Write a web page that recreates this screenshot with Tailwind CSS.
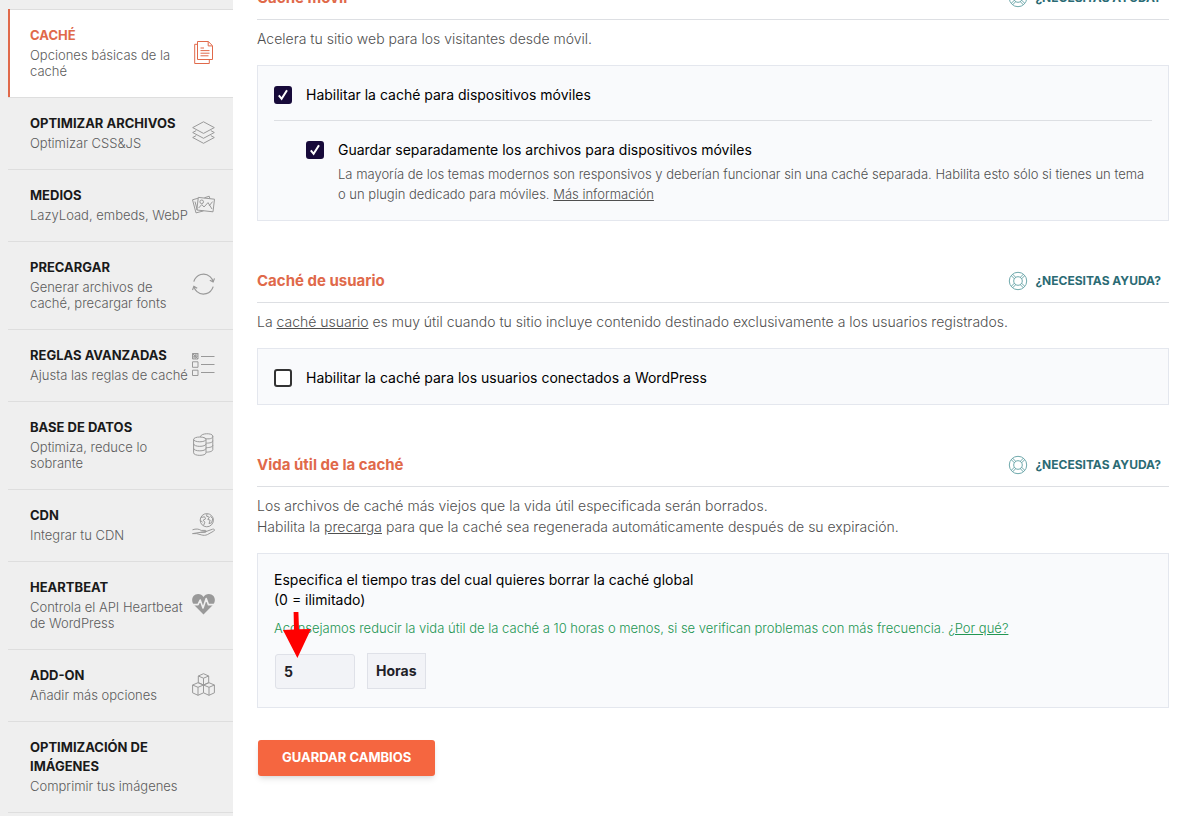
<!DOCTYPE html>
<html lang="es">
<head>
  <meta charset="UTF-8" />
  <meta name="viewport" content="width=device-width, initial-scale=1.0"/>
  <title>Caché</title>
  <script src="https://cdn.jsdelivr.net/npm/@tailwindcss/browser@4"></script>
</head>
<body class="bg-white text-[#4f4f4f] font-['Inter',sans-serif] overflow-x-hidden">

<!-- Life ring, shared by the help links -->
<svg class="hidden">
  <symbol id="help" viewBox="0 0 20 20" fill="none" stroke="currentColor">
    <circle cx="10" cy="10" r="8.7"/>
    <circle cx="10" cy="10" r="4.3"/>
    <path d="M3.2 4.6 6.3 7.7M4.6 3.2 7.7 6.3M16.8 4.6 13.7 7.7M15.4 3.2 12.3 6.3M3.2 15.4 6.3 12.3M4.6 16.8 7.7 13.7M16.8 15.4 13.7 12.3M15.4 16.8 12.3 13.7"/>
  </symbol>
</svg>

<div class="flex min-h-screen">

  <aside class="w-[233px] shrink-0 bg-[#efefef] pt-[9px] pl-2">
    <nav>
      <a href="#cache" class="flex items-center gap-1 border-t border-[#dedede] bg-white pt-4 pb-[18px] pl-[22px] pr-[18px] relative text-[#e0694a]">
        <span class="absolute left-0 -top-px bottom-0 w-[2px] bg-[#e0694a]"></span>
        <span class="flex-1 min-w-0">
          <span class="block text-[13px] leading-[19px] font-bold mb-[2px]">CACHÉ</span>
          <span class="block text-[13px] leading-4 font-light text-[#5c5c5c]">Opciones básicas de la caché</span>
        </span>
        <svg class="size-[23px] shrink-0" viewBox="0 0 23 23" fill="none" stroke="currentColor">
          <path d="M5.5.5h10.8l4.2 4.2v13.8h-15zM16.2.7v4.2h4.2"/>
          <path d="M5.3 3.3H2.7v19.2h14.6v-3.8"/>
          <path d="M8.5 7h3.5M8.5 9.6h9M8.5 12.2h9M8.5 14.8h8"/>
        </svg>
      </a>
      <a href="#archivos" class="flex items-center gap-1 border-t border-[#dedede] pt-4 pb-[18px] pl-[22px] pr-[18px] text-[#999999]">
        <span class="flex-1 min-w-0">
          <span class="block text-[13px] leading-[19px] font-bold text-[#1a1a1a] mb-[2px]">OPTIMIZAR ARCHIVOS</span>
          <span class="block text-[13px] leading-4 font-light text-[#5c5c5c]">Optimizar CSS&amp;JS</span>
        </span>
        <svg class="size-[23px] shrink-0" viewBox="0 0 23 23" fill="none" stroke="currentColor" stroke-linejoin="round">
          <path d="M11.5.8 22.3 6.6 11.5 12.4.7 6.6z"/>
          <path d="M4.2 9.6.7 11.5 11.5 17.3 22.3 11.5 18.8 9.6"/>
          <path d="M4.2 14.6.7 16.5 11.5 22.3 22.3 16.5 18.8 14.6"/>
        </svg>
      </a>
      <a href="#medios" class="flex items-center gap-1 border-t border-[#dedede] pt-4 pb-[18px] pl-[22px] pr-[18px] text-[#999999]">
        <span class="flex-1 min-w-0">
          <span class="block text-[13px] leading-[19px] font-bold text-[#1a1a1a] mb-[2px]">MEDIOS</span>
          <span class="block text-[13px] leading-4 font-light text-[#5c5c5c] whitespace-nowrap">LazyLoad, embeds, WebP</span>
        </span>
        <svg class="size-[23px] shrink-0" viewBox="0 0 23 23" fill="none" stroke="currentColor" stroke-linejoin="round">
          <path d="M6.3 4.4 22.5 6.2 21 18.8 4.8 17z"/>
          <path d="M6.2 5.2.5 6.8 4 19.9 11.5 17.9"/>
          <path d="M3 8.6 5.2 16.8M12.4 4.8 17.2 3.2 17.8 5.4"/>
          <circle cx="9.7" cy="8.8" r="1.8"/>
          <path d="M6.6 15 9.8 11.6 12 14 16 9.6 20 16M17 13 20.6 8.6"/>
        </svg>
      </a>
      <a href="#precargar" class="flex items-center gap-1 border-t border-[#dedede] pt-4 pb-[18px] pl-[22px] pr-[18px] text-[#999999]">
        <span class="flex-1 min-w-0">
          <span class="block text-[13px] leading-[19px] font-bold text-[#1a1a1a] mb-[2px]">PRECARGAR</span>
          <span class="block text-[13px] leading-4 font-light text-[#5c5c5c]">Generar archivos de caché, precargar fonts</span>
        </span>
        <svg class="size-[23px] shrink-0" viewBox="0 0 23 23" fill="none" stroke="currentColor" stroke-width="1.2">
          <path d="M1.8 8.6C4.2 1.2 12.6-1.2 18 3.6A10 10 0 0 1 21.1 8.6"/>
          <path d="M21.2 13.6C18.8 21 10.4 23.4 5 18.6A10 10 0 0 1 1.9 13.6"/>
          <path d="M17.8 7.2 21.1 8.9 22.5 5.4M5.2 15.2 1.9 13.4.5 17"/>
        </svg>
      </a>
      <a href="#reglas" class="flex items-center gap-1 border-t border-[#dedede] pt-4 pb-[18px] pl-[22px] pr-[18px] text-[#999999]">
        <span class="flex-1 min-w-0">
          <span class="block text-[13px] leading-[19px] font-bold text-[#1a1a1a] mb-[2px]">REGLAS AVANZADAS</span>
          <span class="block text-[13px] leading-4 font-light text-[#5c5c5c] whitespace-nowrap">Ajusta las reglas de caché</span>
        </span>
        <svg class="size-[23px] shrink-0" viewBox="0 0 23 23" fill="none" stroke="currentColor">
          <path d="M.5.5h5.500v5.500H.5zM.5 8.800h5.500v5.500H.5zM.5 17.200h5.500v5.300H.5z"/>
          <path d="M.5.5 6 6M6 .5.5 6M3.200.5v5.500M.5 3.200h5.500M9 3.500h13.500M9 11.500h13.500M9 19.500h13.500"/>
        </svg>
      </a>
      <a href="#datos" class="flex items-center gap-1 border-t border-[#dedede] pt-4 pb-[18px] pl-[22px] pr-[18px] text-[#999999]">
        <span class="flex-1 min-w-0">
          <span class="block text-[13px] leading-[19px] font-bold text-[#1a1a1a] mb-[2px]">BASE DE DATOS</span>
          <span class="block text-[13px] leading-4 font-light text-[#5c5c5c]">Optimiza, reduce lo sobrante</span>
        </span>
        <svg class="size-[23px] shrink-0" viewBox="0 0 23 23" fill="none" stroke="currentColor">
          <ellipse cx="7.8" cy="6.4" rx="6.2" ry="2.4"/>
          <path d="M1.6 6.4v13.4c0 3.4 12.4 3.4 12.4 0V6.4M1.6 10.8c0 3.4 12.4 3.4 12.4 0M1.6 15.3c0 3.4 12.4 3.4 12.4 0"/>
          <path d="M8.4 4C8.4-.2 20.8-.2 20.8 3.2S14 6.2 12.6 5M20.8 3.2v13.4c0 1.6-3 2.6-6.6 2.5M20.8 7.6c0 1.8-3 2.6-6.6 2.5M20.8 12.1c0 1.8-3 2.6-6.6 2.5"/>
        </svg>
      </a>
      <a href="#cdn" class="flex items-center gap-1 border-t border-[#dedede] pt-4 pb-[18px] pl-[22px] pr-[18px] text-[#999999]">
        <span class="flex-1 min-w-0">
          <span class="block text-[13px] leading-[19px] font-bold text-[#1a1a1a] mb-[2px]">CDN</span>
          <span class="block text-[13px] leading-4 font-light text-[#5c5c5c]">Integrar tu CDN</span>
        </span>
        <svg class="size-[23px] shrink-0" viewBox="0 0 23 23" fill="none" stroke="currentColor" stroke-linejoin="round">
          <circle cx="14.8" cy="7.2" r="6.6"/>
          <path d="M9 4.4 12.6 3.8 13.6 5.8 11.2 7.2 12.8 9.2 11.6 12.6M8.4 7.4 10.6 9.2M15 1 14.6 3.2 17.4 4.2 15.8 6.4 18.2 7.2 17 10.6 19.6 9.8 20.8 5.6 18.4 3.4"/>
          <path d="M.5 16.8C4 15.6 6.6 15.8 9.2 17.4H13c2 0 1.8 1.9 0 1.9H8.6M14.4 18.4 20.6 16.2c1.800-.5 2.600.9 1.100 1.900L15.400 21.600c-2 .9-4 .9-6 .3L4.600 20.600H.5z"/>
        </svg>
      </a>
      <a href="#heartbeat" class="flex items-center gap-1 border-t border-[#dedede] pt-4 pb-[18px] pl-[22px] pr-[18px] text-[#999999]">
        <span class="flex-1 min-w-0">
          <span class="block text-[13px] leading-[19px] font-bold text-[#1a1a1a] mb-[2px]">HEARTBEAT</span>
          <span class="block text-[13px] leading-4 font-light text-[#5c5c5c]">Controla el API Heartbeat de WordPress</span>
        </span>
        <svg class="size-[23px] shrink-0" viewBox="0 0 23 23" fill="none">
          <path fill="currentColor" d="M11.5 4C9.6.2 4-.1 1.5 3-.8 6 0 10 2.6 12.6L11.5 21.4 20.4 12.6C23 10 23.8 6 21.5 3 19-.1 13.4.2 11.5 4z"/>
          <path stroke="#efefef" stroke-width="1.6" stroke-linejoin="round" d="M0 11.6H6L8.2 7 11 15 14.2 5.6 16.4 11.6H23"/>
        </svg>
      </a>
      <a href="#addon" class="flex items-center gap-1 border-t border-[#dedede] pt-4 pb-[18px] pl-[22px] pr-[18px] text-[#999999]">
        <span class="flex-1 min-w-0">
          <span class="block text-[13px] leading-[19px] font-bold text-[#1a1a1a] mb-[2px]">ADD-ON</span>
          <span class="block text-[13px] leading-4 font-light text-[#5c5c5c]">Añadir más opciones</span>
        </span>
        <svg class="size-[23px] shrink-0" viewBox="0 0 23 23" fill="none" stroke="currentColor" stroke-linejoin="round">
          <path d="M6.3 3 11.5.7 16.7 3v6.6L11.5 12 6.3 9.6zM6.3 3 11.5 5.2 16.7 3M11.5 5.2V12"/>
          <path d="M.6 12 6 9.7 11.5 12v7.8L6 22.3.6 19.8zM.6 12 6 14.3 11.5 12M6 14.3v8"/>
          <path d="M11.5 12 17 9.7 22.4 12v7.8L17 22.3 11.5 19.8M11.5 12 17 14.3 22.4 12M17 14.3v8"/>
        </svg>
      </a>
      <a href="#imagenes" class="flex items-center gap-1 border-y border-[#dedede] pt-4 pb-[18px] pl-[22px] pr-[18px]">
        <span class="flex-1 min-w-0">
          <span class="block text-[13px] leading-[19px] font-bold text-[#1a1a1a] mb-[2px]">OPTIMIZACIÓN DE IMÁGENES</span>
          <span class="block text-[13px] leading-4 font-light text-[#5c5c5c]">Comprimir tus imágenes</span>
        </span>
      </a>
    </nav>
  </aside>

  <main class="flex-1 min-w-0 pl-6 pr-[15px] -mt-[14px]">
    <form>

      <section>
        <div class="flex items-center justify-between h-[34px] pb-[9px] border-b border-[#dddfe3]">
          <h2 class="text-[15px] font-bold text-[#e0694a]">Caché móvil</h2>
          <a href="#ayuda" class="flex items-center gap-[7px] pr-2 text-xs font-bold text-[#2b6b74]">
            <svg class="size-5 text-[#6fa9ac]"><use href="#help"/></svg>¿NECESITAS AYUDA?
          </a>
        </div>
        <p class="pt-2 pb-4 text-sm leading-[21px] font-light">Acelera tu sitio web para los visitantes desde móvil.</p>
        <div class="border border-[#e4e7ee] bg-[#f9fafc] px-4 pt-[19px] pb-4">
          <label class="flex items-center gap-[14px] text-sm leading-5 text-black pb-[15px] border-b border-[#dddfe3]">
            <span class="grid place-items-center">
              <input type="checkbox" checked class="peer col-start-1 row-start-1 appearance-none size-[18px] rounded-[3px] border-2 border-[#333333] bg-white checked:border-[#170a3a] checked:bg-[#170a3a]" />
              <svg class="col-start-1 row-start-1 size-3 pointer-events-none hidden peer-checked:block" viewBox="0 0 12 12" fill="none" stroke="white" stroke-width="2"><path d="M1.800 6.400 4.600 9.800 10 1.200"/></svg>
            </span>
            Habilitar la caché para dispositivos móviles
          </label>
          <div class="pl-8 pt-[19px]">
            <label class="flex items-center gap-[14px] text-sm leading-5 text-black">
              <span class="grid place-items-center">
                <input type="checkbox" checked class="peer col-start-1 row-start-1 appearance-none size-[18px] rounded-[3px] border-2 border-[#333333] bg-white checked:border-[#170a3a] checked:bg-[#170a3a]" />
                <svg class="col-start-1 row-start-1 size-3 pointer-events-none hidden peer-checked:block" viewBox="0 0 12 12" fill="none" stroke="white" stroke-width="2"><path d="M1.800 6.400 4.600 9.800 10 1.200"/></svg>
              </span>
              Guardar separadamente los archivos para dispositivos móviles
            </label>
            <p class="pl-8 pt-1 text-[13px] leading-5 font-light">La mayoría de los temas modernos son responsivos y deberían funcionar sin una caché separada. Habilita esto sólo si tienes un tema o un plugin dedicado para móviles. <a href="#info" class="underline">Más información</a></p>
          </div>
        </div>
      </section>

      <section class="mt-12">
        <div class="flex items-center justify-between h-[34px] pb-[9px] border-b border-[#dddfe3]">
          <h2 class="text-[15px] font-bold text-[#e0694a]">Caché de usuario</h2>
          <a href="#ayuda" class="flex items-center gap-[7px] pr-2 text-xs font-bold text-[#2b6b74]">
            <svg class="size-5 text-[#6fa9ac]"><use href="#help"/></svg>¿NECESITAS AYUDA?
          </a>
        </div>
        <p class="pt-2 pb-4 text-sm leading-[21px] font-light">La <a href="#usuario" class="underline">caché usuario</a> es muy útil cuando tu sitio incluye contenido destinado exclusivamente a los usuarios registrados.</p>
        <div class="border border-[#e4e7ee] bg-[#f9fafc] px-4 pt-[19px] pb-4">
          <label class="flex items-center gap-[14px] text-sm leading-5 text-black">
            <span class="grid place-items-center">
              <input type="checkbox" class="peer col-start-1 row-start-1 appearance-none size-[18px] rounded-[3px] border-2 border-[#333333] bg-white checked:border-[#170a3a] checked:bg-[#170a3a]" />
              <svg class="col-start-1 row-start-1 size-3 pointer-events-none hidden peer-checked:block" viewBox="0 0 12 12" fill="none" stroke="white" stroke-width="2"><path d="M1.800 6.400 4.600 9.800 10 1.200"/></svg>
            </span>
            Habilitar la caché para los usuarios conectados a WordPress
          </label>
        </div>
      </section>

      <section class="mt-12">
        <div class="flex items-center justify-between h-[34px] pb-[9px] border-b border-[#dddfe3]">
          <h2 class="text-[15px] font-bold text-[#e0694a]">Vida útil de la caché</h2>
          <a href="#ayuda" class="flex items-center gap-[7px] pr-2 text-xs font-bold text-[#2b6b74]">
            <svg class="size-5 text-[#6fa9ac]"><use href="#help"/></svg>¿NECESITAS AYUDA?
          </a>
        </div>
        <p class="pt-2 pb-4 text-sm leading-[21px] font-light">Los archivos de caché más viejos que la vida útil especificada serán borrados.<br/>Habilita la <a href="#precarga" class="underline">precarga</a> para que la caché sea regenerada automáticamente después de su expiración.</p>
        <div class="relative border border-[#e4e7ee] bg-[#f9fafc] px-4 pt-4 pb-[18px]">
          <label for="lifespan" class="block text-sm leading-5 text-black">Especifica el tiempo tras del cual quieres borrar la caché global<br/>(0 = ilimitado)</label>
          <p class="pt-2 text-[13px] leading-5 font-light text-[#239653]">Aconsejamos reducir la vida útil de la caché a 10 horas o menos, si se verifican problemas con más frecuencia. <a href="#porque" class="underline">¿Por qué?</a></p>
          <div class="flex items-end gap-3 pt-[15px] pl-px text-[#1f2127]">
            <input id="lifespan" type="text" inputmode="numeric" value="5" class="w-20 h-[35px] px-2 rounded-[3px] border border-[#dfe1e8] bg-[#f2f3f7] text-sm font-bold" />
            <select aria-label="Unidad" class="appearance-none h-9 px-2 border border-[#dfe1e8] bg-[#f2f3f7] text-sm font-bold">
              <option>Horas</option>
            </select>
          </div>
          <!-- Arrow pointing at the hours box -->
          <svg class="absolute left-[25px] top-[58px] w-7 h-[46px] pointer-events-none" viewBox="0 0 28 46" fill="#ff0000"><path d="M10.600 0H15.400L16 17.200 28 17 14.400 46 0 18 11 17.500z"/></svg>
        </div>
      </section>

      <button type="submit" class="mt-8 ml-px h-9 px-6 rounded-[3px] bg-[#f56640] text-white text-[13px] font-bold shadow-md">GUARDAR CAMBIOS</button>
    </form>
  </main>

</div>
</body>
</html>
